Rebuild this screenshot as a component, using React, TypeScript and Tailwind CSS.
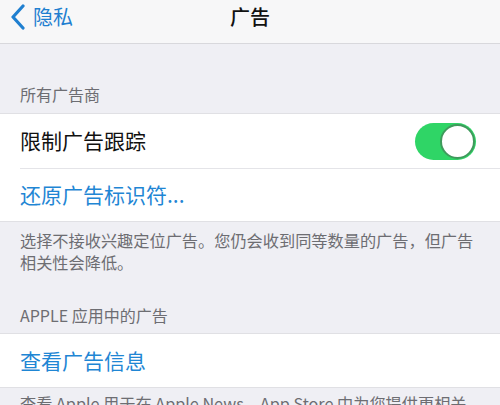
export default function App() {
  const font = { fontFamily: '"Noto Sans CJK SC", "Noto Sans", sans-serif' };
  return (
    <div className="w-[500px] h-[405px] overflow-hidden bg-[#efeff4]" style={font}>
      {/* nav bar */}
      <div className="relative h-[44px] bg-[#f7f7f8] border-b border-[#d8d8dc] flex items-start">
        <div className="flex items-center pl-[10px] pt-[4px] text-[#1f7fd0]">
          <svg width="16" height="26" viewBox="0 0 16 26" fill="none">
            <path d="M13 2 L3 13 L13 24" stroke="#1f7fd0" strokeWidth="3.2" strokeLinecap="round" strokeLinejoin="round" />
          </svg>
          <span className="ml-[7px] text-[20px] leading-[26px]">隐私</span>
        </div>
        <div className="absolute left-0 right-0 top-[4px] text-center text-[20px] leading-[26px] text-[#111] font-medium">
          广告
        </div>
      </div>

      {/* section 1 */}
      <div className="pt-[40px] px-[20px] pb-[9px] text-[16px] leading-[20px] text-[#6d6d72]">所有广告商</div>
      <div className="bg-white border-y border-[#e0e0e4]">
        <div className="h-[54px] flex items-center justify-between pl-[20px] pr-[24px]">
          <span className="text-[21px] text-[#111]">限制广告跟踪</span>
          <div className="relative w-[61px] h-[37px] rounded-full bg-[#2fd566]">
            <div className="absolute right-[1px] top-[1px] w-[35px] h-[35px] rounded-full bg-white border-2 border-[#3f9a5c]" />
          </div>
        </div>
        <div className="ml-[20px] border-t border-[#e4e4e8]" />
        <div className="h-[52px] flex items-center pl-[20px]">
          <span className="text-[21px] text-[#1f86d4]">还原广告标识符...</span>
        </div>
      </div>
      <div className="px-[20px] pt-[7px] text-[16.2px] leading-[22px] text-[#6d6d72] whitespace-nowrap">
        <div>选择不接收兴趣定位广告。您仍会收到同等数量的广告，但广告</div>
        <div>相关性会降低。</div>
      </div>

      {/* section 2 */}
      <div className="pt-[32px] px-[20px] pb-[8px] text-[16px] leading-[20px] text-[#6d6d72]">APPLE 应用中的广告</div>
      <div className="bg-white border-y border-[#e0e0e4]">
        <div className="h-[53px] flex items-center pl-[20px]">
          <span className="text-[21px] text-[#1f86d4]">查看广告信息</span>
        </div>
      </div>
      <div className="px-[20px] pt-[4px] text-[16.2px] leading-[22px] text-[#6d6d72] whitespace-nowrap">
        查看 Apple 用于在 Apple News、App Store 中为您提供更相关
      </div>
    </div>
  );
}
